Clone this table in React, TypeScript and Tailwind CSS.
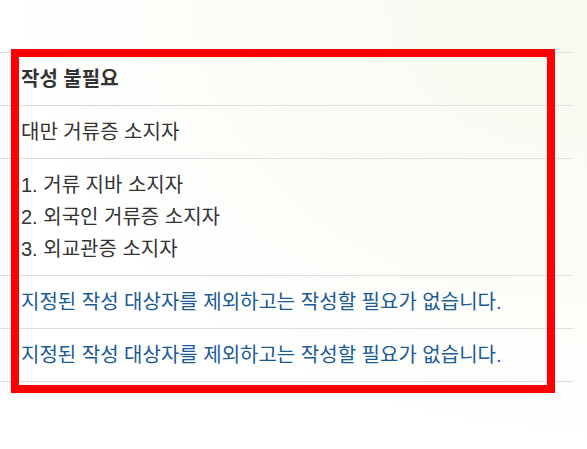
const rows: { lines: string[]; kind: "head" | "plain" | "link" }[] = [
  { lines: ["작성 불필요"], kind: "head" },
  { lines: ["대만 거류증 소지자"], kind: "plain" },
  {
    lines: ["1. 거류 지바 소지자", "2. 외국인 거류증 소지자", "3. 외교관증 소지자"],
    kind: "plain",
  },
  { lines: ["지정된 작성 대상자를 제외하고는 작성할 필요가 없습니다."], kind: "link" },
  { lines: ["지정된 작성 대상자를 제외하고는 작성할 필요가 없습니다."], kind: "link" },
];

export default function App() {
  return (
    <main
      className="relative w-[587px] h-[449px] overflow-hidden bg-white"
      style={{ fontFamily: '"Liberation Sans", "Noto Sans CJK KR", sans-serif' }}
    >
      {/* faint tint in the top right corner */}
      <div className="pointer-events-none absolute inset-0 bg-[radial-gradient(ellipse_at_top_right,#f8faef_0%,#fbfcf6_35%,rgba(255,255,255,0)_70%)]" />

      {/* Table */}
      <div className="relative pt-[52px] w-[573px]">
        <div className="border-t border-[#dddddd]">
          {rows.map((row, i) => (
            <div
              key={i}
              className={`border-b border-[#dddddd] pl-[21px] py-[10px] text-[20px] leading-[32px] ${
                row.kind === "head"
                  ? "font-bold text-[#333333]"
                  : row.kind === "link"
                  ? "text-[#1a5a96]"
                  : "text-[#333333]"
              }`}
            >
              {row.lines.map((line) => (
                <div key={line}>{line}</div>
              ))}
            </div>
          ))}
        </div>
      </div>

      {/* Highlight box */}
      <div className="absolute left-[11px] top-[49px] w-[544px] h-[344px] border-[8px] border-[#ff0000]" />
    </main>
  );
}
